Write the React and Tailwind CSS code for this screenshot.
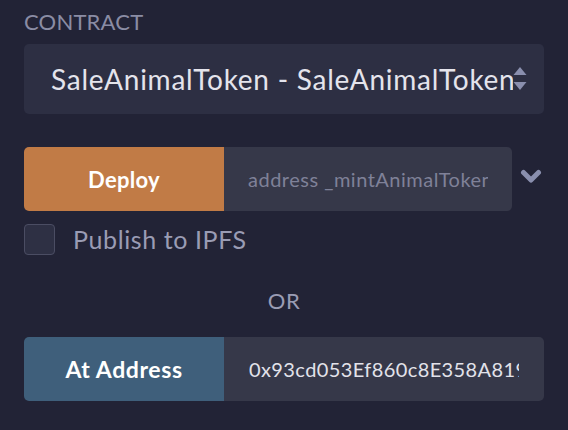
import React from "react";

const font = { fontFamily: "Lato, 'Noto Sans', sans-serif" };

function SelectArrows() {
  return (
    <svg width="14" height="24" viewBox="0 0 14 24" className="shrink-0">
      <path d="M7 0 L13.5 8 L0.5 8 Z" fill="#8a8fae" />
      <path d="M7 23 L13.5 15 L0.5 15 Z" fill="#8a8fae" />
    </svg>
  );
}

function Chevron() {
  return (
    <svg width="22" height="16" viewBox="0 0 22 16">
      <polyline
        points="3.5,3.5 11,11 18.5,3.5"
        fill="none"
        stroke="#8a8fae"
        strokeWidth="5"
        strokeLinecap="round"
        strokeLinejoin="round"
      />
    </svg>
  );
}

export default function App() {
  return (
    <div className="w-[568px] h-[430px] bg-[#222336] px-6 pt-[8px] overflow-hidden" style={font}>
      {/* Contract select */}
      <div className="text-[22px] leading-[28px] text-[#8a8ca4] tracking-[0.2px]">CONTRACT</div>
      <div className="mt-[8px] h-[70px] rounded-[5px] bg-[#2d2f43] flex items-center pl-[27px] pr-[17px]">
        <div className="flex-1 overflow-hidden whitespace-nowrap text-[28px] tracking-[0.75px] text-[#e4e4ec]">
          SaleAnimalToken - SaleAnimalToken
        </div>
        <SelectArrows />
      </div>

      {/* Deploy row */}
      <div className="mt-[33px] flex items-center">
        <div className="flex h-[64px] w-[488px] rounded-[5px] overflow-hidden">
          <button className="w-[200px] shrink-0 bg-[#c17b46] text-white font-bold text-[22px] tracking-[0.3px]">Deploy</button>
          <div className="flex-1 bg-[#363849] flex items-center pl-[24px] pr-[24px] overflow-hidden">
            <span className="whitespace-nowrap overflow-hidden text-[20px] tracking-[0.5px] text-[#7f8198]">address _mintAnimalToken</span>
          </div>
        </div>
        <div className="flex-1 flex justify-center pb-[4px] pl-[6px]">
          <Chevron />
        </div>
      </div>

      {/* Publish checkbox */}
      <div className="mt-[13px] flex items-center gap-[18px]">
        <div className="w-[31px] h-[31px] rounded-[4px] border-[1.5px] border-[#4b4d63] bg-[#2e3044]" />
        <span className="text-[25px] leading-[31px] tracking-[0.6px] text-[#9a9cb4]">Publish to IPFS</span>
      </div>

      {/* OR */}
      <div className="mt-[32px] text-center text-[22px] leading-[28px] tracking-[0.5px] text-[#9a9cb4]">OR</div>

      {/* At address row */}
      <div className="mt-[22px] flex h-[64px] rounded-[5px] overflow-hidden">
        <button className="w-[200px] shrink-0 bg-[#3f5f7b] text-white font-bold text-[23px] tracking-[0.6px]">At Address</button>
        <div className="flex-1 bg-[#363849] flex items-center pl-[25px] pr-[25px] overflow-hidden">
          <span className="whitespace-nowrap overflow-hidden text-[20px] tracking-[0.4px] text-[#e2e2ea]">0x93cd053Ef860c8E358A819F2d1a5c8f3e7b42A11</span>
        </div>
      </div>
    </div>
  );
}
